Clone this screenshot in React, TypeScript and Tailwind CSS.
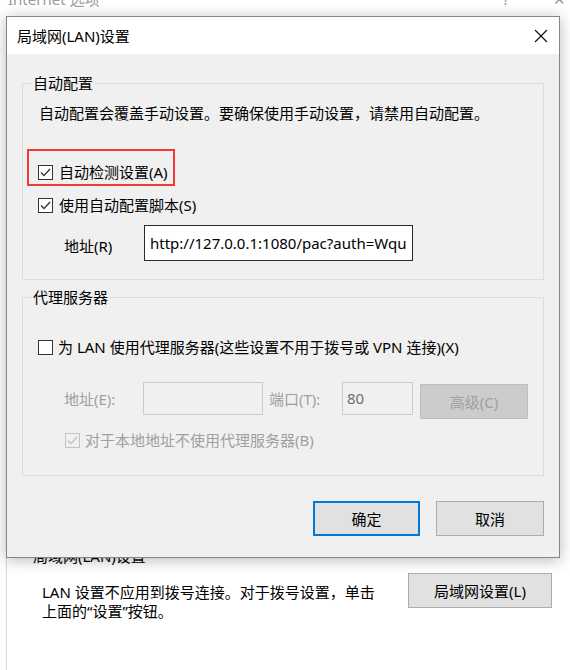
import React from "react";

const font = "font-['Noto_Sans','Noto_Sans_CJK_SC',sans-serif]";

function Check({ checked, disabled }: { checked: boolean; disabled?: boolean }) {
    const c = disabled ? "#c4c4c4" : "#333333";
    return (
        <svg width="15" height="15" viewBox="0 0 15 15" className="shrink-0">
            <rect x="0.5" y="0.5" width="14" height="14" fill={disabled ? "#f0f0f0" : "#ffffff"} stroke={c} />
            {checked && <path d="M3 7.6 L6 10.6 L12 4" fill="none" stroke={c} strokeWidth="1.4" />}
        </svg>
    );
}

function WinButton({ label, primary, disabled, className = "" }: { label: string; primary?: boolean; disabled?: boolean; className?: string }) {
    let style = "bg-[#e1e1e1] border border-[#adadad] text-black";
    if (primary) style = "bg-[#e1e1e1] border-2 border-[#0078d7] text-black";
    if (disabled) style = "bg-[#cccccc] border border-[#bfbfbf] text-[#a0a0a0]";
    return (
        <div className={`h-[35px] flex items-center justify-center leading-[20px] ${style} ${className}`}>
            {label}
        </div>
    );
}

export default function App() {
    return (
        <div className={`relative w-[570px] h-[670px] overflow-hidden bg-white text-[15px] text-black ${font}`}>
            {/* Internet 选项 window behind */}
            <div className="flex items-center h-[20px] -mt-[11px] pl-[8px] leading-[20px] text-[#9a9a9a]">
                <span>Internet 选项</span>
                <span className="ml-auto w-[14px] text-center">?</span>
                <span className="ml-[38px] w-[16px] text-center mr-[3px]">✕</span>
            </div>
            <div className="ml-[6px] h-[661px] border-l border-[#d9d9d9]">
                <div className="mt-[537px] pl-[26px] leading-[20px]">局域网(LAN)设置</div>
                <div className="flex items-start mt-[7px] pr-[18px]">
                    <div className="mt-[10px] pl-[35px] leading-[19px]">
                        LAN 设置不应用到拨号连接。对于拨号设置，单击
                        <br />
                        上面的“设置”按钮。
                    </div>
                    <WinButton label="局域网设置(L)" className="ml-auto w-[144px]" />
                </div>
            </div>

            {/* 局域网(LAN)设置 dialog */}
            <div className="absolute left-[6px] top-[16px] w-[554px] h-[542px] flex flex-col border border-[#858585] bg-[#f0f0f0] shadow-[0_2px_14px_rgba(0,0,0,0.28)]">
                <div className="h-[37px] shrink-0 flex items-center bg-white pl-[10px] leading-[20px]">
                    <span>局域网(LAN)设置</span>
                    <svg width="14" height="14" viewBox="0 0 14 14" className="ml-auto mr-[11px]">
                        <path d="M1 1 L13 13 M13 1 L1 13" stroke="#111" strokeWidth="1.2" />
                    </svg>
                </div>

                <div className="flex-1 flex flex-col px-[15px] pt-[19px]">
                    <fieldset className="border border-[#dcdcdc] pb-[18px]">
                        <legend className="ml-[8px] px-[2px] leading-[20px]">自动配置</legend>
                        <div className="mt-[10px] pl-[16px] leading-[20px]">
                            自动配置会覆盖手动设置。要确保使用手动设置，请禁用自动配置。
                        </div>
                        <div className="relative mt-[39px] pl-[15px] h-[20px] flex items-center gap-[6px] leading-[20px]">
                            <Check checked />
                            <span>自动检测设置(A)</span>
                            <span className="absolute left-[4px] -top-[13px] w-[148px] h-[37px] border-2 border-[#f23a3a]" />
                        </div>
                        <div className="mt-[13px] pl-[15px] h-[20px] flex items-center gap-[6px] leading-[20px]">
                            <Check checked />
                            <span>使用自动配置脚本(S)</span>
                        </div>
                        <div className="mt-[12px] pl-[41px] flex items-center">
                            <span className="w-[80px] pt-[3px] leading-[20px]">地址(R)</span>
                            <div className="w-[269px] h-[36px] flex items-center border border-[#2b2b2b] bg-white pl-[5px] overflow-hidden whitespace-nowrap leading-[20px] -mt-[2px]">
                                http://127.0.0.1:1080/pac?auth=Wqu
                            </div>
                        </div>
                    </fieldset>

                    <fieldset className="mt-[7px] border border-[#dcdcdc] pb-[25px]">
                        <legend className="ml-[8px] px-[2px] leading-[20px]">代理服务器</legend>
                        <div className="mt-[30px] pl-[15px] h-[20px] flex items-center gap-[5px] leading-[20px]">
                            <Check checked={false} />
                            <span>为 LAN 使用代理服务器(这些设置不用于拨号或 VPN 连接)(X)</span>
                        </div>
                        <div className="mt-[25px] pl-[41px] flex items-start text-[#a0a0a0] leading-[20px]">
                            <span className="w-[79px] h-[33px] flex items-center">地址(E):</span>
                            <div className="w-[120px] h-[33px] border border-[#cccccc]" />
                            <span className="ml-[6px] w-[73px] h-[33px] flex items-center">端口(T):</span>
                            <div className="w-[71px] h-[33px] flex items-center border border-[#cccccc] pl-[4px] pb-[2px] text-[#6d6d6d]">80</div>
                            <WinButton label="高级(C)" disabled className="ml-[7px] mt-[2px] w-[108px]" />
                        </div>
                        <div className="mt-[11px] pl-[42px] h-[20px] flex items-center gap-[5px] leading-[20px] text-[#a0a0a0]">
                            <Check checked disabled />
                            <span>对于本地地址不使用代理服务器(B)</span>
                        </div>
                    </fieldset>

                    <div className="mt-[25px] flex justify-end gap-[16px]">
                        <WinButton label="确定" primary className="w-[107px]" />
                        <WinButton label="取消" className="w-[108px]" />
                    </div>
                </div>
            </div>
        </div>
    );
}
